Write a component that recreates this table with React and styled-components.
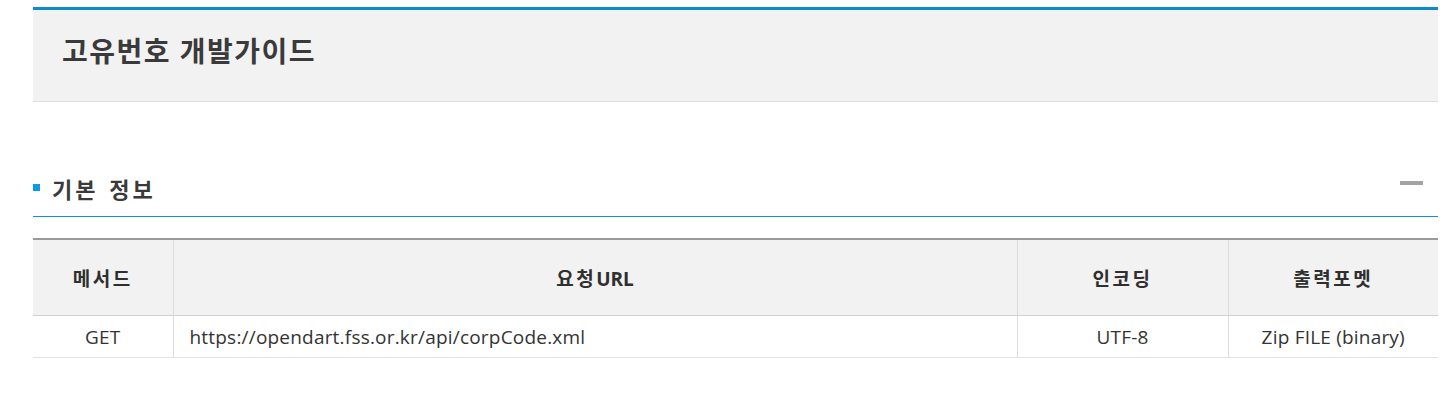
import React from "react";
import styled, { createGlobalStyle } from "styled-components";

const GlobalStyle = createGlobalStyle`
  html, body {
    margin: 0;
    padding: 0;
    background: #fff;
    font-family: "Open Sans", "Noto Sans CJK KR", sans-serif;
    color: #333;
  }
`;

const Page = styled.div`
  width: 1405px;
  margin-left: 33px;
  padding-top: 7px;
`;

const TitleBar = styled.div`
  box-sizing: border-box;
  height: 95px;
  background: #f2f2f2;
  border-top: 3px solid #0a8ad1;
  border-bottom: 1px solid #dcdcdc;
  display: flex;
  align-items: center;
  padding: 0 0 12px 29px;
`;

const Title = styled.h1`
  margin: 0;
  font-size: 28px;
  font-weight: 700;
  color: #3a3a3a;
  letter-spacing: 1.5px;
`;

const Section = styled.section`
  margin-top: 70px;
`;

const SectionHead = styled.div`
  box-sizing: border-box;
  display: flex;
  align-items: center;
  justify-content: space-between;
  height: 45px;
  padding-bottom: 13px;
  border-bottom: 1px solid #0b93dc;
`;

const SectionTitle = styled.h2`
  margin: 0;
  display: flex;
  align-items: center;
  gap: 12px;
  font-size: 22px;
  font-weight: 700;
  color: #3a3a3a;
  letter-spacing: 3px;
  word-spacing: 2px;

  &::before {
    content: "";
    width: 7px;
    height: 7px;
    background: #0b9be3;
  }
`;

const Collapse = styled.button`
  width: 23px;
  height: 4px;
  padding: 0;
  border: none;
  background: #a3a3a3;
  margin-right: 15px;
  margin-bottom: 9px;
  cursor: pointer;
`;

const Table = styled.table`
  width: 100%;
  margin-top: 21px;
  border-collapse: collapse;
  border-top: 2px solid #9a9a9a;
  table-layout: fixed;
`;

const Th = styled.th`
  height: 75px;
  background: #f2f2f2;
  border-bottom: 1px solid #cfcfcf;
  border-left: 1px solid #dcdcdc;
  font-size: 19px;
  font-weight: 700;
  letter-spacing: 2.5px;
  color: #2f2f2f;
  padding: 0;
  &:first-child {
    border-left: none;
  }
`;

const Latin = styled.span`
  letter-spacing: 0;
`;

const Td = styled.td`
  height: 41px;
  border-bottom: 1px solid #e2e2e2;
  border-left: 1px solid #dcdcdc;
  font-size: 19px;
  letter-spacing: 0.2px;
  color: #333;
  padding: 0 ${(p) => (p.$left ? "16px" : "0")};
  text-align: ${(p) => (p.$left ? "left" : "center")};
  &:first-child {
    border-left: none;
  }
`;

export default function App() {
  return (
    <Page>
      <GlobalStyle />
      <TitleBar>
        <Title>고유번호 개발가이드</Title>
      </TitleBar>

      <Section>
        <SectionHead>
          <SectionTitle>기본 정보</SectionTitle>
          <Collapse aria-label="접기" />
        </SectionHead>

        <Table>
          <colgroup>
            <col style={{ width: 140 }} />
            <col style={{ width: 844 }} />
            <col style={{ width: 211 }} />
            <col style={{ width: 210 }} />
          </colgroup>
          <thead>
            <tr>
              <Th>메서드</Th>
              <Th>
                요청<Latin>URL</Latin>
              </Th>
              <Th>인코딩</Th>
              <Th>출력포멧</Th>
            </tr>
          </thead>
          <tbody>
            <tr>
              <Td>GET</Td>
              <Td $left>https://opendart.fss.or.kr/api/corpCode.xml</Td>
              <Td>UTF-8</Td>
              <Td>Zip FILE (binary)</Td>
            </tr>
          </tbody>
        </Table>
      </Section>
    </Page>
  );
}
